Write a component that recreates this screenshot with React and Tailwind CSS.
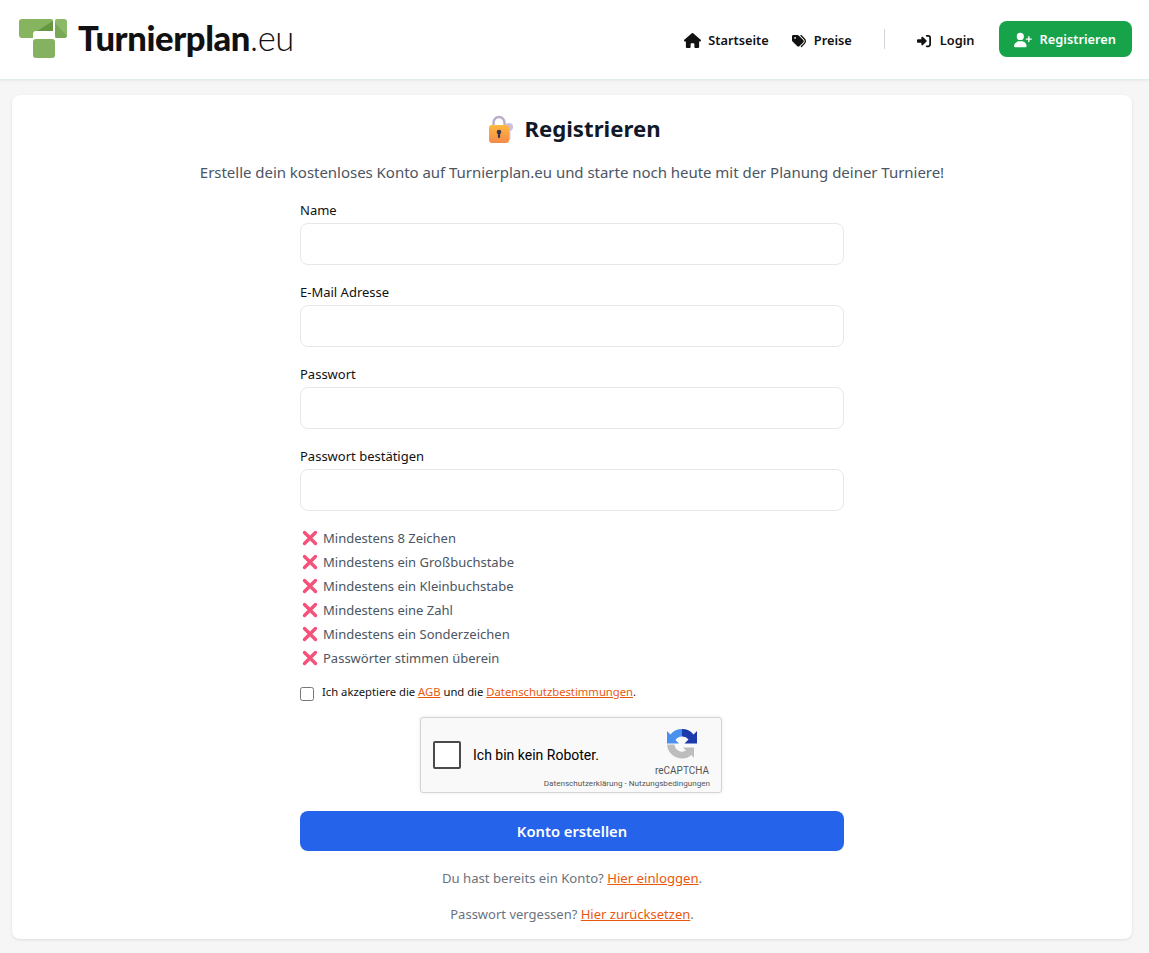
import { FaHouse, FaTags, FaRightToBracket, FaUserPlus } from "react-icons/fa6";

const regeln = [
  "Mindestens 8 Zeichen",
  "Mindestens ein Großbuchstabe",
  "Mindestens ein Kleinbuchstabe",
  "Mindestens eine Zahl",
  "Mindestens ein Sonderzeichen",
  "Passwörter stimmen überein",
];

const felder = ["Name", "E-Mail Adresse", "Passwort", "Passwort bestätigen"];

function Logo() {
  return (
    <div className="flex items-center">
      <svg width="48" height="39" viewBox="0 0 48 39" className="block">
        <path d="M3 0H32a2 2 0 0 1 2 2V12H17a3 3 0 0 0-3 3V19H3a3 3 0 0 1-3-3V3a3 3 0 0 1 3-3z" fill="#86b45f" />
        <path d="M34 2L18 12H34z" fill="#659640" />
        <path d="M38 0H45a3 3 0 0 1 3 3V16a3 3 0 0 1-3 3H38a2 2 0 0 1-2-2V2a2 2 0 0 1 2-2z" fill="#8cb968" />
        <path d="M36 4L48 17a3 3 0 0 1-3 2H38a2 2 0 0 1-2-2z" fill="#79a754" />
        <rect x="14" y="20" width="22" height="19" rx="3" fill="#85b260" />
      </svg>
      <span className="ml-[11px] text-[34.6px] leading-none tracking-[-0.4px] text-[#111] font-['Lato',sans-serif]">
        <span className="font-black">Turnierplan</span>
        <span className="font-light">.eu</span>
      </span>
    </div>
  );
}

function SchlossEmoji() {
  return (
    <svg width="26" height="28" viewBox="0 0 26 28" className="block">
      <defs>
        <linearGradient id="schloss" x1="0" y1="0" x2="0" y2="1">
          <stop offset="0" stopColor="#fdb940" />
          <stop offset="1" stopColor="#f58a4b" />
        </linearGradient>
      </defs>
      <path d="M6.500 14V7.500a5.500 5.500 0 0 1 11 0V14" fill="none" stroke="#b9adc8" strokeWidth="2.400" />
      <circle cx="22" cy="12" r="4" fill="#cbbfdc" />
      <path d="M20.500 13h3v11l-1.500 1.500-1.500-1.500z" fill="#cbbfdc" />
      <rect x="2" y="10" width="20" height="18" rx="3" fill="url(#schloss)" />
      <circle cx="12" cy="17" r="2.300" fill="#3a3350" />
      <rect x="10.900" y="17" width="2.200" height="6" rx="1.100" fill="#3a3350" />
    </svg>
  );
}

function Kreuz() {
  return (
    <svg width="16" height="16" viewBox="0 0 16 16" className="block shrink-0">
      <path d="M2.500 2.500L13.500 13.500M13.500 2.500L2.500 13.500" stroke="#f4527a" strokeWidth="3.400" strokeLinecap="round" />
    </svg>
  );
}

function Recaptcha() {
  return (
    <div className="flex h-[76px] w-[302px] rounded-[3px] border border-[#d3d3d3] bg-[#f9f9f9] shadow-[0_0_4px_rgba(0,0,0,0.08)] font-['Roboto',sans-serif]">
      <div className="ml-3 mt-[23px] size-7 shrink-0 rounded-[2px] border-2 border-[#4a4a4a] bg-white" />
      <span className="ml-[12px] mt-[29px] whitespace-nowrap text-sm leading-[17px] text-black">Ich bin kein Roboter.</span>
      {/* die Nutzungszeile ragt nach links aus der schmalen Spalte */}
      <div className="ml-auto mr-[11px] flex w-[70px] shrink-0 flex-col items-end pt-[10px]">
        <svg width="32" height="32" viewBox="0 0 32 32" className="mr-[12px] block">
          <path d="M16 1A15 15 0 0 0 4.500 6.400L1 3V15.500H13L9.500 12A7.500 7.500 0 0 1 16 8.500z" fill="#4a90ee" />
          <path d="M16 1A15 15 0 0 1 27.500 6.400L31 3V15.500H18.500L22.500 11.500A7.500 7.500 0 0 0 16 8.500z" fill="#1c3aa9" />
          <path d="M1 16.500H8.500A7.500 7.500 0 0 0 20 22.500L17 19.500H28V30L25.500 27A15 15 0 0 1 1 16.500z" fill="#bdbdbd" />
        </svg>
        <span className="mr-px mt-[5px] text-[10px] leading-[12px] text-[#555]">reCAPTCHA</span>
        <span className="mt-[1px] whitespace-nowrap text-[8.1px] leading-[10px] text-[#555]">Datenschutzerklärung - Nutzungsbedingungen</span>
      </div>
    </div>
  );
}

export default function App() {
  return (
    <div className="min-h-[953px] bg-[#f6f6f6] pb-[14px] font-['Noto_Sans',sans-serif]">
      <header className="flex h-20 items-center justify-between border-b border-[#e3eee6] bg-white pb-[2px] pl-[19px] pr-[17px] shadow-[0_1px_2px_rgba(0,0,0,0.05)]">
        <Logo />
        <nav className="flex items-center text-[12.8px] font-semibold text-[#111]">
          <a className="flex items-center gap-[7px] pt-[4px]"><FaHouse className="size-[17px]" />Startseite</a>
          <a className="ml-[23px] flex items-center gap-[8px] pt-[4px]"><FaTags className="size-[14px]" />Preise</a>
          <div className="mx-8 h-5 w-px bg-[#d1d5db]" />
          <a className="flex items-center gap-[9px] pt-[4px]"><FaRightToBracket className="size-[14px]" />Login</a>
          <a className="ml-6 flex h-9 items-center gap-2 rounded-lg bg-[#16a34a] pl-[15px] pr-4 pt-[3px] text-white"><FaUserPlus className="size-[18px]" />Registrieren</a>
        </nav>
      </header>

      <main className="ml-3 mr-[17px] mt-[15px] rounded-lg bg-white pb-[15px] pt-[16px] shadow-[0_1px_3px_rgba(0,0,0,0.1)]">
        <h1 className="flex items-center justify-center gap-[11px] pl-[4px] text-[22.2px] font-bold leading-9 text-[#111827]">
          <SchlossEmoji />
          Registrieren
        </h1>
        <p className="mt-[13px] text-center text-[15px] leading-6 tracking-[-0.03px] text-[#4b5563]">
          Erstelle dein kostenloses Konto auf Turnierplan.eu und starte noch heute mit der Planung deiner Turniere!
        </p>

        <form className="mx-auto mt-4 w-[544px]">
          <div className="flex flex-col gap-[17px]">
            {felder.map((f) => (
              <div key={f}>
                <label className="mb-[3px] block text-[13px] leading-[20px] text-[#111]">{f}</label>
                <div className="h-[42px] rounded-lg border border-[#e5e7eb] bg-white" />
              </div>
            ))}
          </div>

          <ul className="mt-[15px] pl-[2px]">
            {regeln.map((r) => (
              <li key={r} className="flex h-6 items-center gap-[5px] text-[13px] text-[#4b5563]">
                <Kreuz />
                <span className="pt-[2px]">{r}</span>
              </li>
            ))}
          </ul>

          <div className="mt-[11px] flex items-start">
            <div className="mt-[6px] size-[14px] rounded-[2.5px] border border-[#767676] bg-white" />
            <p className="ml-2 pt-px text-[11.25px] leading-5 text-[#111]">
              Ich akzeptiere die <a className="text-[#ea580c] underline">AGB</a> und die <a className="text-[#ea580c] underline">Datenschutzbestimmungen</a>.
            </p>
          </div>

          <div className="mt-[15px] flex justify-center pr-[2px]"><Recaptcha /></div>

          <button type="button" className="mt-[18px] h-10 w-full rounded-lg bg-[#2563eb] pt-px text-[14.75px] font-semibold text-white">
            Konto erstellen
          </button>

          <p className="mt-[17px] text-center text-[13.15px] leading-5 text-[#6b7280]">
            Du hast bereits ein Konto? <a className="text-[#ea580c] underline">Hier einloggen</a>.
          </p>
          <p className="mt-4 text-center text-[13px] leading-5 text-[#6b7280]">
            Passwort vergessen? <a className="text-[#ea580c] underline">Hier zurücksetzen</a>.
          </p>
        </form>
      </main>
    </div>
  );
}
